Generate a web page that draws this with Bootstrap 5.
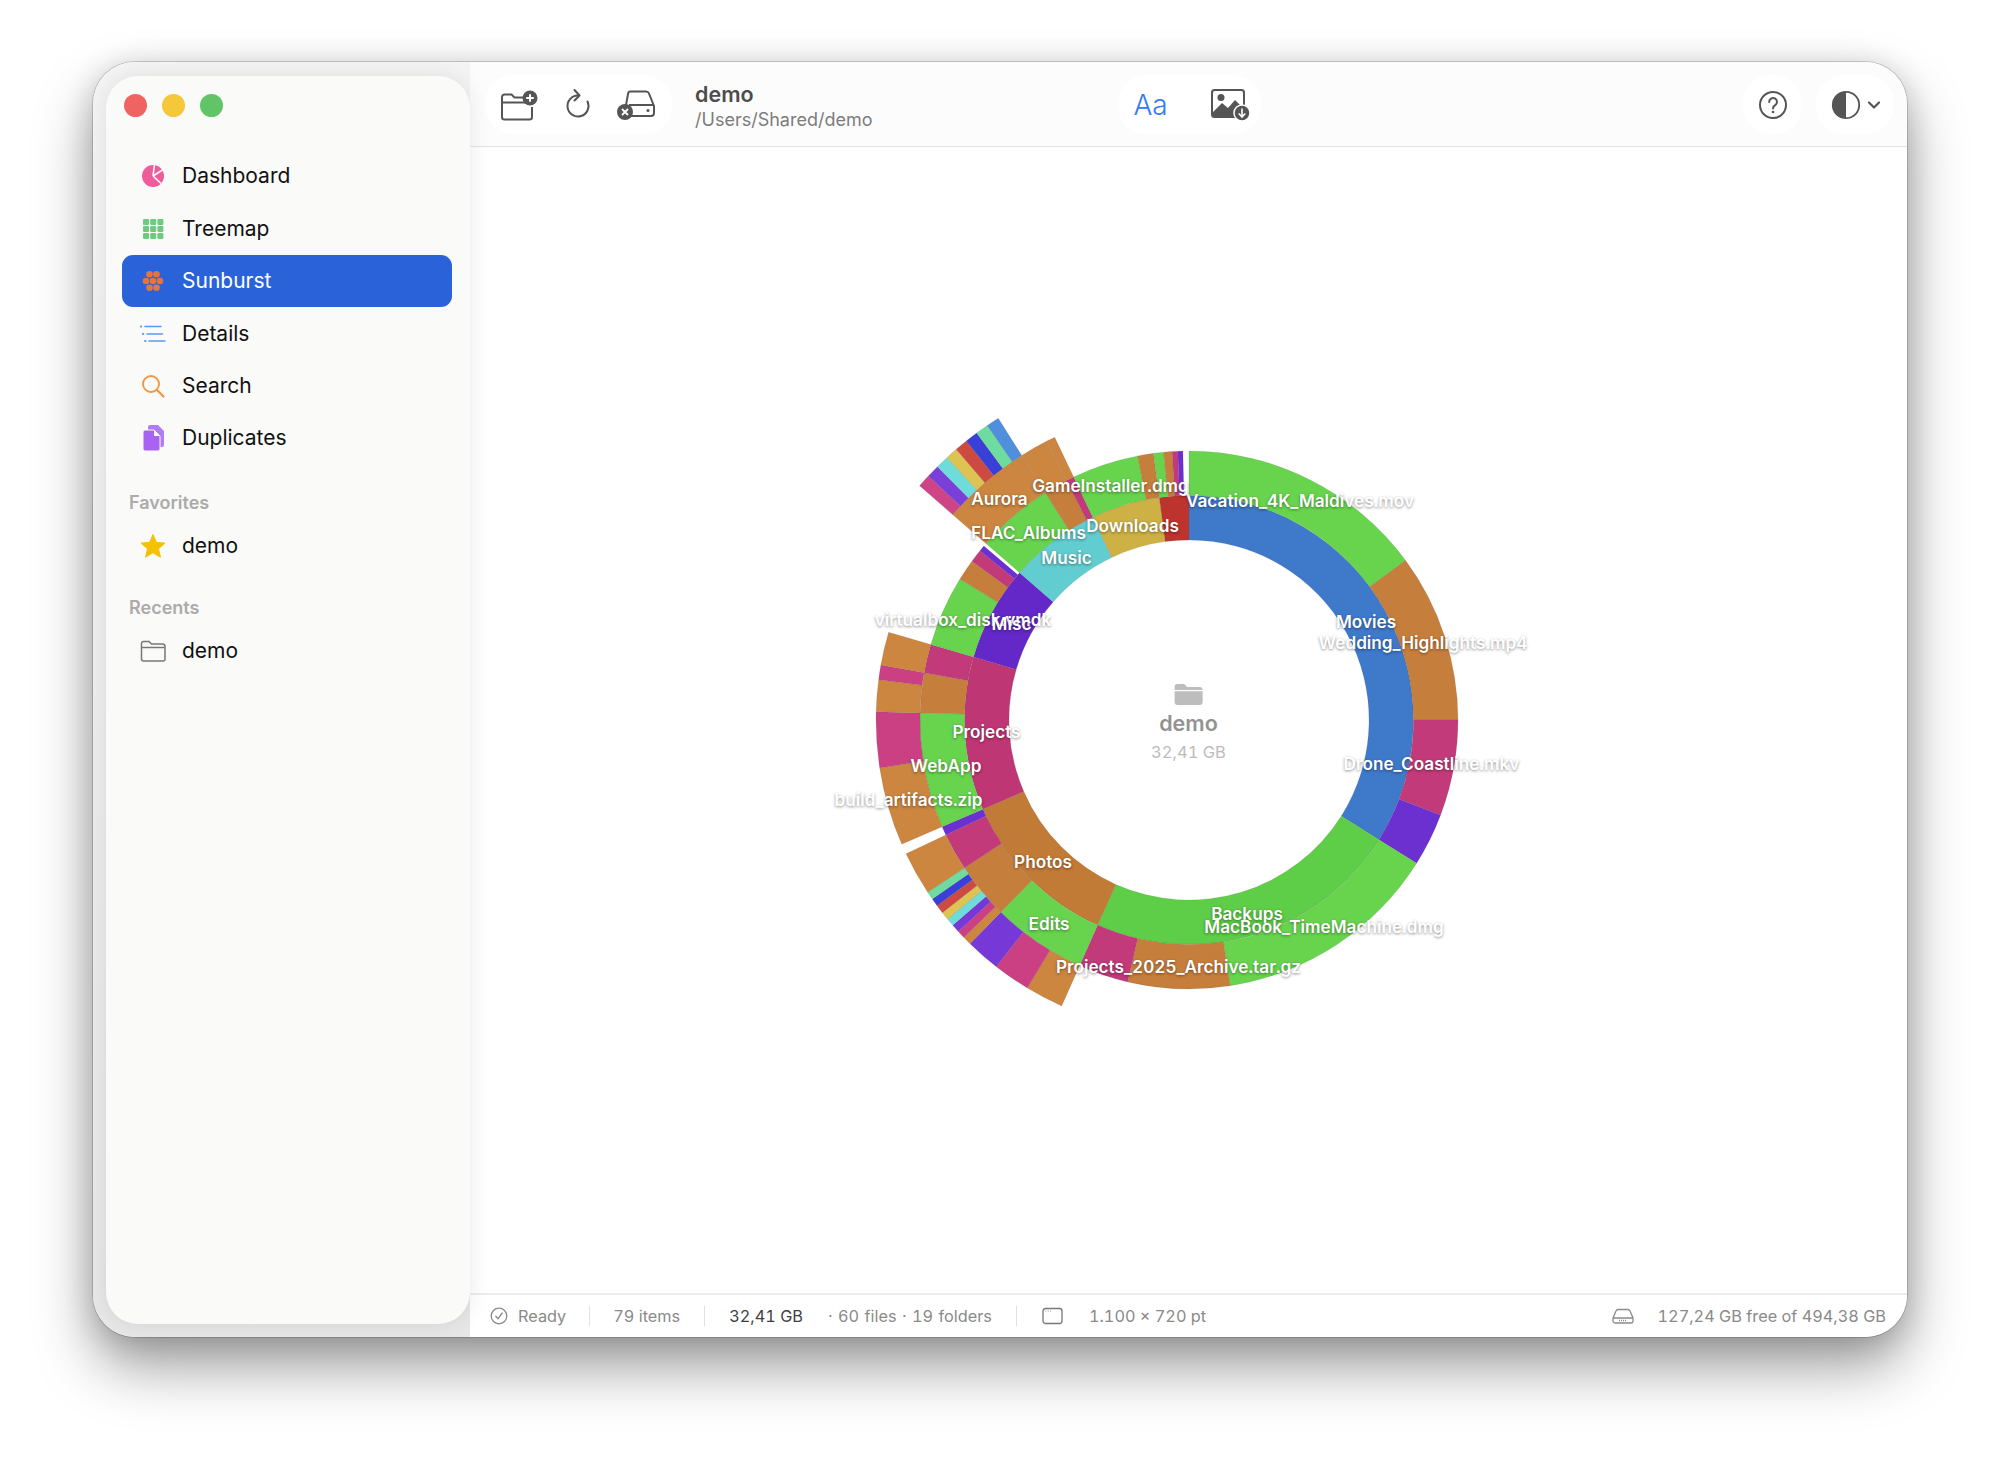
<!DOCTYPE html>
<html lang="en">

<head>
  <meta charset="UTF-8">
  <meta name="viewport" content="width=device-width, initial-scale=1.0">
  <title>Sunburst</title>
  <link href="https://cdn.jsdelivr.net/npm/bootstrap@5.3.0/dist/css/bootstrap.min.css" rel="stylesheet">
  <style>
    html, body {
      height: 100%;
    }

    body {
      background-color: #fff;
      font-family: Inter, "Liberation Sans", sans-serif;
      font-variant-numeric: tabular-nums;
      padding: 62px 93px 122px;
      overflow: hidden;
    }

    .app-window {
      height: 1275px;
      border-radius: 42px;
      overflow: hidden;
      background-color: #fff;
      box-shadow: 0 0 0 1px rgba(0, 0, 0, .16), 0 30px 58px rgba(0, 0, 0, .38), 0 4px 30px rgba(0, 0, 0, .16);
    }

    .side-gutter {
      width: 377px;
      flex: none;
      padding: 14px 0 13px 13px;
      background: linear-gradient(#f4f4f4, #e7e7e7);
    }

    .side-panel {
      height: 100%;
      border-radius: 32px;
      background-color: #fafaf9;
      box-shadow: 0 0 22px rgba(0, 0, 0, .09);
      position: relative;
      z-index: 2;
      padding: 0 18px 0 16px;
    }

    .lights {
      height: 58px;
      padding-left: 2px;
      gap: 15px;
    }

    .light {
      width: 23px;
      height: 23px;
      border-radius: 50%;
    }

    .side-nav {
      margin-top: 15.75px;
    }

    .side-nav .nav-link {
      height: 52.5px;
      padding: 0 0 0 18px;
      gap: 16px;
      border-radius: 11px;
      color: #111;
      font-size: 21px;
    }

    .side-nav .nav-link.active {
      background-color: #2a63d9;
      color: #fff;
    }

    .nav-ico {
      width: 26px;
      height: 26px;
      flex: none;
    }

    .side-head {
      font-size: 18px;
      font-weight: 600;
      color: #ababab;
      padding-left: 7px;
    }

    .main-pane {
      min-width: 0;
    }

    .top-bar {
      height: 85px;
      flex: none;
      background-color: #fcfcfc;
      border-bottom: 1px solid #e4e4e4;
      padding: 13px 13px 0 15px;
    }

    .tool-pill {
      height: 59px;
      background-color: #fff;
      border-radius: 28px;
      flex: none;
    }

    .path-title {
      font-size: 21.5px;
      font-weight: 600;
      color: #4c4c4c;
      line-height: 27px;
    }

    .path-sub {
      font-size: 18px;
      color: #7c7c7c;
      line-height: 24px;
    }

    .aa-btn {
      font-size: 28px;
      font-weight: 300;
      color: #3478f6;
      line-height: 1;
    }

    .chart-area {
      min-height: 0;
    }

    .chart-box {
      width: 760px;
      height: 760px;
      position: relative;
      flex: none;
    }

    .chart-box svg.rings {
      display: block;
    }

    .ring-label {
      position: absolute;
      transform: translate(-50%, -50%);
      white-space: nowrap;
      color: #fff;
      font-size: 17.2px;
      font-weight: 600;
      line-height: 1;
      text-shadow: 0 1px 3px rgba(0, 0, 0, .45);
    }

    .chart-mid {
      line-height: 1;
      padding-top: 2px;
    }

    .mid-name {
      font-size: 21.5px;
      font-weight: 600;
      color: #929292;
    }

    .mid-size {
      font-size: 16.5px;
      color: #bcbcbc;
    }

    .status-bar {
      height: 44px;
      flex: none;
      border-top: 2px solid #ececec;
      background-color: #fff;
      font-size: 16.3px;
      color: #8a8a8a;
      padding: 0 21px 0 20px;
    }

    .status-sep {
      width: 1px;
      height: 20px;
      background-color: #e2e2e2;
      flex: none;
    }

    .status-strong {
      color: #3f3f3f;
    }

    .status-count {
      word-spacing: 1px;
    }
  </style>
</head>

<body>
  <div class="app-window d-flex">
    <div class="side-gutter">
      <aside class="side-panel">
        <div class="lights d-flex align-items-center">
          <span class="light" style="background-color:#ef6461"></span>
          <span class="light" style="background-color:#f5c83b"></span>
          <span class="light" style="background-color:#61c466"></span>
        </div>

        <nav class="nav nav-pills flex-column side-nav">
          <a class="nav-link d-flex align-items-center" href="#">
            <svg class="nav-ico" viewBox="0 0 26 26">
              <circle cx="13" cy="13" r="11" fill="#ee5c9c" />
              <path d="M13 13 14.5 1.5M13 13 22.5 7M13 13 21 20.5" stroke="#fafaf9" stroke-width="1.6" fill="none" />
            </svg>
            Dashboard
          </a>
          <a class="nav-link d-flex align-items-center" href="#">
            <svg class="nav-ico" viewBox="0 0 26 26" fill="#6ccb7f">
              <rect x="3" y="3" width="6" height="6" rx="1.2" /><rect x="10.2" y="3" width="6" height="6" rx="1.2" /><rect x="17.4" y="3" width="6" height="6" rx="1.2" />
              <rect x="3" y="10" width="6" height="6" rx="1.2" /><rect x="10.2" y="10" width="6" height="6" rx="1.2" /><rect x="17.4" y="10" width="6" height="6" rx="1.2" />
              <rect x="3" y="17" width="6" height="6" rx="1.2" /><rect x="10.2" y="17" width="6" height="6" rx="1.2" /><rect x="17.4" y="17" width="6" height="6" rx="1.2" />
            </svg>
            Treemap
          </a>
          <a class="nav-link active d-flex align-items-center" href="#">
            <svg class="nav-ico" viewBox="0 0 26 26" fill="#e8733c">
              <circle cx="9.5" cy="6.2" r="3.3" /><circle cx="16.5" cy="6.2" r="3.3" />
              <circle cx="6" cy="13" r="3.3" /><circle cx="13" cy="13" r="3.3" /><circle cx="20" cy="13" r="3.3" />
              <circle cx="9.5" cy="19.8" r="3.3" /><circle cx="16.5" cy="19.8" r="3.3" />
            </svg>
            Sunburst
          </a>
          <a class="nav-link d-flex align-items-center" href="#">
            <svg class="nav-ico" viewBox="0 0 26 26" fill="none" stroke="#5f97f6" stroke-width="1.5" stroke-linecap="round">
              <path d="M5 5.5H21M7 13H22.5M9 20H25" />
              <path d="M0.500 5.500h.6M2.800 13h.6M5 20h.6" stroke-width="1.8" />
            </svg>
            Details
          </a>
          <a class="nav-link d-flex align-items-center" href="#">
            <svg class="nav-ico" viewBox="0 0 26 26" fill="none" stroke="#f2983f" stroke-width="1.9" stroke-linecap="round">
              <circle cx="11" cy="11" r="8" />
              <path d="M17 17 23.5 23.5" stroke-width="2.3" />
            </svg>
            Search
          </a>
          <a class="nav-link d-flex align-items-center" style="height:51px" href="#">
            <svg class="nav-ico" viewBox="0 0 26 26">
              <path d="M10 0h8l6 6v14a2 2 0 0 1-2 2H10a2 2 0 0 1-2-2V2a2 2 0 0 1 2-2z" fill="#b17cf4" />
              <path d="M5 5h9l6 6v13a2 2 0 0 1-2 2H5a2 2 0 0 1-2-2V7a2 2 0 0 1 2-2z" fill="#a863f2" stroke="#fafaf9" stroke-width="1" />
              <path d="M14 5v6h6" fill="#fafaf9" />
            </svg>
            Duplicates
          </a>
        </nav>

        <div class="side-head" style="margin-top:26px">Favorites</div>
        <nav class="nav nav-pills flex-column side-nav" style="margin-top:7.5px">
          <a class="nav-link d-flex align-items-center" style="height:44px" href="#">
            <svg class="nav-ico" viewBox="0 0 26 26">
              <path d="M13 1.5 16.4 9.4 25 10.1 18.5 15.8 20.5 24.2 13 19.7 5.5 24.2 7.5 15.8 1 10.1 9.6 9.4z" fill="#f6c100" stroke="#f6c100" stroke-width="1" stroke-linejoin="round" />
            </svg>
            demo
          </a>
        </nav>

        <div class="side-head" style="margin-top:26.5px">Recents</div>
        <nav class="nav nav-pills flex-column side-nav" style="margin-top:7.5px">
          <a class="nav-link d-flex align-items-center" style="height:44px" href="#">
            <svg class="nav-ico" viewBox="0 0 26 26" fill="none" stroke="#777" stroke-width="1.5">
              <path d="M1.5 21V5.5a2 2 0 0 1 2-2H9l2.500 2.500h11A2.500 2.500 0 0 1 25 8.500V21a2 2 0 0 1-2 2H3.500a2 2 0 0 1-2-2z" />
              <path d="M1.500 9.500h23" />
            </svg>
            demo
          </a>
        </nav>
      </aside>
    </div>

    <main class="main-pane flex-grow-1 d-flex flex-column">
      <header class="top-bar d-flex align-items-start">
        <div class="tool-pill d-flex align-items-center" style="width:187px;padding-left:15px;gap:25px">
          <svg width="38" height="32" viewBox="0 0 38 32" fill="none" stroke="#555" stroke-width="2">
            <path d="M2 28V8a2.500 2.500 0 0 1 2.500-2.500h7l3 3H24M2 13.500h23M32 18v10a2.500 2.500 0 0 1-2.500 2.500h-25A2.500 2.500 0 0 1 2 28" />
            <circle cx="30" cy="9" r="7.500" fill="#555" stroke="none" />
            <path d="M30 5.200v7.600M26.200 9h7.600" stroke="#fff" stroke-width="2" />
          </svg>
          <svg width="28" height="32" viewBox="0 0 28 32" fill="none" stroke="#555" stroke-width="2" stroke-linecap="round" stroke-linejoin="round">
            <path d="M15 6.500a10.500 10.500 0 1 0 9.500 6" />
            <path d="M11.500 1 16.500 6.500 11.500 11.500" />
          </svg>
          <svg width="40" height="32" viewBox="0 0 40 32" fill="none" stroke="#555" stroke-width="2" stroke-linejoin="round">
            <path d="M14 2.500h16c1.500 0 2.500.7 3 2L38 17v7a3 3 0 0 1-3 3H14M10 16 12 5c.3-1.500 1-2.500 2-2.500M13 16h25" />
            <circle cx="32" cy="21.500" r="1.500" fill="#555" stroke="none" />
            <circle cx="9" cy="23" r="8" fill="#555" stroke="none" />
            <path d="M6 20l6 6M12 20l-6 6" stroke="#fff" stroke-width="1.800" />
          </svg>
        </div>
        <div style="margin-left:23px;padding-top:6px">
          <div class="path-title">demo</div>
          <div class="path-sub">/Users/Shared/demo</div>
        </div>
        <div class="tool-pill d-flex align-items-center" style="width:143px;margin-left:245px;padding-left:16px;gap:42px">
          <span class="aa-btn">Aa</span>
          <svg width="40" height="34" viewBox="0 0 40 34" fill="none">
            <rect x="2" y="2" width="32" height="27" rx="2.500" stroke="#555" stroke-width="2" />
            <path d="M3 28 3 24 12 15 18 20 25 12 33 20 33 28z" fill="#555" />
            <circle cx="11" cy="9.500" r="3.500" fill="#555" />
            <circle cx="32" cy="25" r="8" fill="#555" stroke="#fff" stroke-width="1.500" />
            <path d="M32 20.500v8M28.800 25.500 32 29l3.200-3.500" stroke="#fff" stroke-width="1.600" fill="none" />
          </svg>
        </div>
        <div class="ms-auto d-flex" style="gap:14px">
          <div class="tool-pill d-flex align-items-center justify-content-center" style="width:59px">
            <svg width="30" height="30" viewBox="0 0 30 30" fill="none" stroke="#555" stroke-width="2">
              <circle cx="15" cy="15" r="13" />
              <path d="M11.200 12a3.900 3.900 0 1 1 6 3.200c-1.400 .9-2.200 1.600-2.200 3.200" stroke-linecap="round" />
              <circle cx="15" cy="22" r="1.300" fill="#555" stroke="none" />
            </svg>
          </div>
          <div class="tool-pill d-flex align-items-center" style="width:78px;padding-left:15px;gap:6px">
            <svg width="30" height="30" viewBox="0 0 30 30">
              <circle cx="15" cy="15" r="13.200" fill="none" stroke="#555" stroke-width="1.800" />
              <path d="M15 1.800a13.200 13.200 0 0 0 0 26.400z" fill="#555" />
            </svg>
            <svg width="14" height="10" viewBox="0 0 14 10" fill="none" stroke="#555" stroke-width="2.200" stroke-linecap="round" stroke-linejoin="round">
              <path d="M2 2.500 7 7.500 12 2.500" />
            </svg>
          </div>
        </div>
      </header>

      <section class="chart-area flex-grow-1 d-flex align-items-center justify-content-center">
        <div class="chart-box" id="chart">
          <svg class="rings" id="rings" width="760" height="760" viewBox="-380 -380 760 760"></svg>
          <div class="chart-mid position-absolute top-50 start-50 translate-middle text-center d-flex flex-column align-items-center">
            <svg width="30" height="24" viewBox="0 0 30 24" fill="#bdbdbd">
              <path d="M1 5a3 3 0 0 1 3-3h6.500l3 3H26a3 3 0 0 1 3 3H1z" />
              <path d="M1 9.300h28V20a3 3 0 0 1-3 3H4a3 3 0 0 1-3-3z" />
            </svg>
            <div class="mid-name" style="margin-top:7px">demo</div>
            <div class="mid-size" style="margin-top:9px">32,41 GB</div>
          </div>
        </div>
      </section>

      <footer class="status-bar d-flex align-items-center">
        <svg width="18" height="18" viewBox="0 0 18 18" fill="none" stroke="#8a8a8a" stroke-width="1.300">
          <circle cx="9" cy="9" r="7.800" />
          <path d="M5.800 9.300 8 11.800 12.200 6" stroke-linecap="round" stroke-linejoin="round" />
        </svg>
        <span style="margin-left:10px">Ready</span>
        <span class="status-sep" style="margin-left:23px"></span>
        <span style="margin-left:23px">79 items</span>
        <span class="status-sep" style="margin-left:24px"></span>
        <span class="status-strong" style="margin-left:24px">32,41 GB</span>
        <span class="status-count" style="margin-left:25px">· 60 files · 19 folders</span>
        <span class="status-sep" style="margin-left:24px"></span>
        <svg style="margin-left:25px" width="21" height="18" viewBox="0 0 21 18" fill="none" stroke="#777" stroke-width="1.300">
          <rect x="1" y="1.500" width="19" height="15" rx="2.500" />
          <path d="M3.500 4h.8M5.800 4h.8M8 4h.8" stroke-width="1" />
        </svg>
        <span style="margin-left:26px">1.100 × 720 pt</span>
        <svg class="ms-auto" width="22" height="16" viewBox="0 0 22 16" fill="none" stroke="#8a8a8a" stroke-width="1.300">
          <path d="M1 10 4 3a2.500 2.500 0 0 1 2.200-1.500h9.600A2.500 2.500 0 0 1 18 3l3 7v3a2 2 0 0 1-2 2H3a2 2 0 0 1-2-2zM1 10h20" />
          <path d="M7 12.500h8" stroke-dasharray="1 1" />
        </svg>
        <span style="margin-left:24px">127,24 GB free of 494,38 GB</span>
      </footer>
    </main>
  </div>

  <script>
    // ring radii
    const radii = [180, 224.5, 269, 313, 357];

    // [ring, start angle, end angle, colour], angles clockwise from 12 o'clock
    const segments = [
      [0, 0, 122.2, '#3f79c9'], [0, 122.2, 204, '#5ecd47'], [0, 204, 246.6, '#c27a37'], [0, 246.6, 286.3, '#bf3674'],
      [0, 286.3, 311, '#6428c8'], [0, 311, 334.6, '#62cdd0'], [0, 334.6, 352.4, '#cdb145'], [0, 352.4, 360, '#bd342e'],

      [1, 0, 53.6, '#68d44e'], [1, 53.6, 90, '#c67e3c'], [1, 90, 110.7, '#c33a7a'], [1, 110.7, 122.2, '#6c2fd0'],
      [1, 122.2, 171.2, '#68d44e'], [1, 171.2, 193.2, '#c67e3c'], [1, 193.2, 204, '#c33a7a'],
      [1, 204, 224.4, '#68d44e'], [1, 224.4, 236.6, '#c67e3c'], [1, 236.6, 244.7, '#c33a7a'], [1, 244.7, 246.6, '#6c2fd0'],
      [1, 246.6, 271.5, '#68d44e'], [1, 271.5, 280.1, '#c67e3c'], [1, 280.1, 286.3, '#c33a7a'],
      [1, 286.3, 301.6, '#68d44e'], [1, 301.6, 306.2, '#c67e3c'], [1, 306.2, 309, '#c33a7a'], [1, 309, 310.3, '#6c2fd0'],
      [1, 311, 327.7, '#68d44e'], [1, 327.7, 332.9, '#c67e3c'], [1, 332.9, 334.6, '#c33a7a'],
      [1, 334.6, 349, '#68d44e'], [1, 349, 352.4, '#c67e3c'],
      [1, 352.4, 354.6, '#68d44e'], [1, 354.6, 356.4, '#c67e3c'], [1, 356.4, 357.6, '#c33a7a'], [1, 357.6, 358.7, '#6c2fd0'],

      [2, 204, 211.1, '#cc8640'], [2, 211.1, 218, '#cb4083'], [2, 218, 224.4, '#7638d6'],
      [2, 224.4, 226, '#cc8640'], [2, 226, 227.5, '#cb4083'], [2, 227.5, 229, '#7638d6'], [2, 229, 230.5, '#6fdcdc'],
      [2, 230.5, 232, '#dcc352'], [2, 232, 233.6, '#cc4a3f'], [2, 233.6, 235.1, '#3a3fd8'], [2, 235.1, 236.6, '#6fdc9f'],
      [2, 236.6, 244.7, '#cc8640'],
      [2, 246.6, 261.2, '#cc8640'], [2, 261.2, 271.5, '#cb4083'], [2, 271.5, 277.4, '#cc8640'], [2, 277.4, 280.1, '#cb4083'], [2, 280.1, 286.3, '#cc8640'],
      [2, 311, 327.7, '#cc8640'], [2, 327.7, 332.9, '#cc8640'], [2, 332.9, 334.6, '#cc8640'],

      [3, 311, 313.1, '#cf4486'], [3, 313.1, 315.2, '#7a3fd8'], [3, 315.2, 317.3, '#6fdcdc'], [3, 317.3, 319.3, '#dcc352'],
      [3, 319.3, 321.4, '#cc4a3f'], [3, 321.4, 323.5, '#3a3fd8'], [3, 323.5, 325.6, '#6fdc9f'], [3, 325.6, 327.7, '#4f8fdc']
    ];

    // [text, offset x, offset y] from the chart centre
    const labels = [
      ['Vacation_4K_Maldives.mov', 111.5, -219],
      ['Wedding_Highlights.mp4', 234.5, -77],
      ['Movies', 177.5, -98],
      ['Drone_Coastline.mkv', 243, 44],
      ['Backups', 58.5, 194],
      ['MacBook_TimeMachine.dmg', 135.5, 207],
      ['Projects_2025_Archive.tar.gz', -10, 247],
      ['Edits', -139.5, 204],
      ['Photos', -145.5, 142],
      ['build_artifacts.zip', -280, 80],
      ['WebApp', -242.5, 46],
      ['Projects', -202, 12],
      ['virtualbox_disk.vmdk', -225.5, -100],
      ['Misc', -177, -96],
      ['Music', -122, -162],
      ['FLAC_Albums', -160, -187],
      ['Downloads', -56, -194],
      ['Aurora', -189, -221],
      ['GameInstaller.dmg', -78, -234]
    ];

    function point(r, deg) {
      const a = deg * Math.PI / 180;
      return (r * Math.sin(a)).toFixed(2) + ' ' + (-r * Math.cos(a)).toFixed(2);
    }

    function arcPath(r0, r1, a0, a1) {
      const large = a1 - a0 > 180 ? 1 : 0;
      return 'M' + point(r0, a0) + 'A' + r0 + ' ' + r0 + ' 0 ' + large + ' 1 ' + point(r0, a1) +
        'L' + point(r1, a1) + 'A' + r1 + ' ' + r1 + ' 0 ' + large + ' 0 ' + point(r1, a0) + 'Z';
    }

    const svg = document.getElementById('rings');
    segments.forEach(s => {
      const path = document.createElementNS('http://www.w3.org/2000/svg', 'path');
      path.setAttribute('d', arcPath(radii[s[0]], radii[s[0] + 1], s[1], s[2]));
      path.setAttribute('fill', s[3]);
      path.setAttribute('stroke', 'rgba(70,70,70,.22)');
      path.setAttribute('stroke-width', '.5');
      svg.appendChild(path);
    });

    const chart = document.getElementById('chart');
    labels.forEach(l => {
      const div = document.createElement('div');
      div.className = 'ring-label';
      div.textContent = l[0];
      div.style.left = (380 + l[1]) + 'px';
      div.style.top = (380 + l[2]) + 'px';
      chart.appendChild(div);
    });
  </script>

  <script src="https://cdn.jsdelivr.net/npm/bootstrap@5.3.0/dist/js/bootstrap.bundle.min.js"></script>
</body>

</html>
